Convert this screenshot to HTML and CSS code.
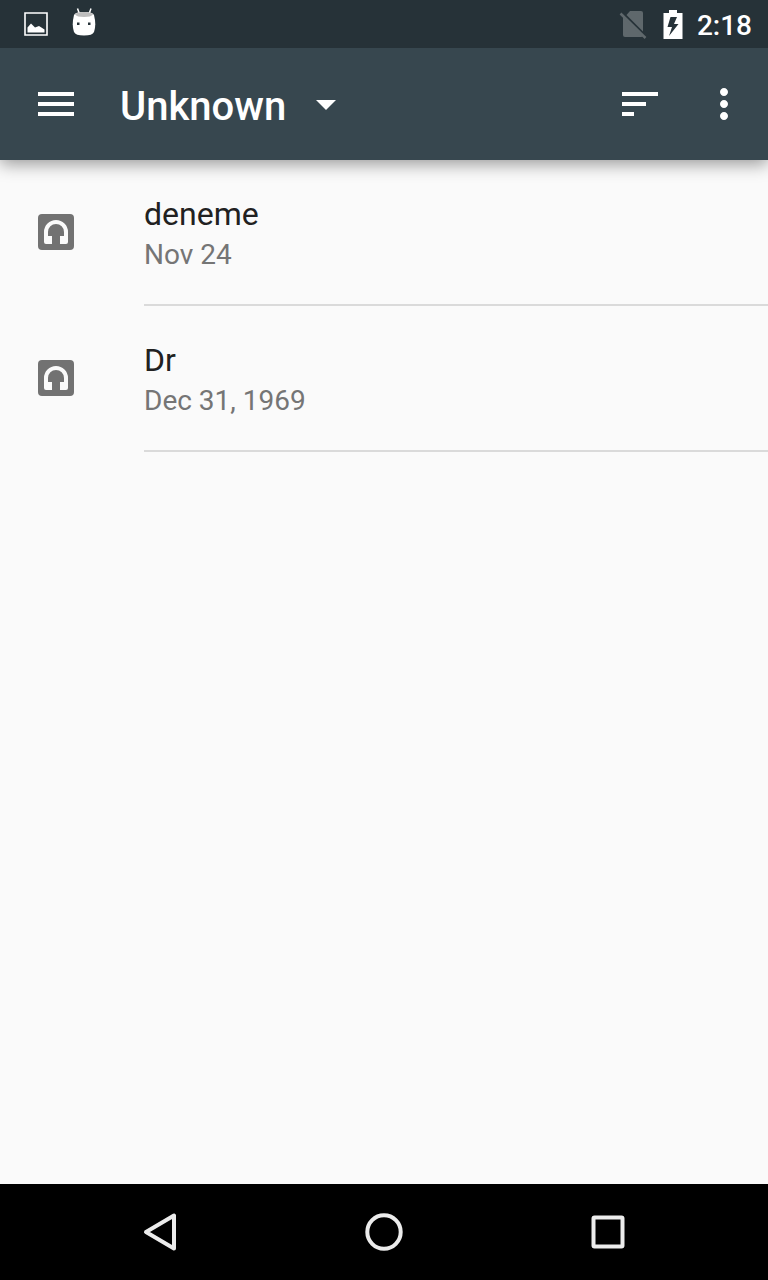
FILE: index.html
```html
<!DOCTYPE html>
<html lang="en">
  <head>
    <meta charset="UTF-8" />
    <meta name="viewport" content="width=device-width, initial-scale=1.0" />
    <title>Unknown</title>
    <link rel="stylesheet" href="styles.css">
  </head>
  <body>
    <!-- Status bar -->
    <div class="status-bar">
      <div class="status-group notifications">
        <svg width="24" height="24" viewBox="0 0 24 24">
          <path d="M1 1H23V23H1Z" fill="none" stroke="#fff" stroke-width="1.6" />
          <path d="M3.5 20.5V15.500L7 11.500L11 15.500L15 14L20.500 17.500V20.500Z" fill="#fff" />
        </svg>
        <svg width="24" height="32" viewBox="0 0 24 32">
          <path d="M5.500 0.500L7.500 6M19 0.500L17 6" stroke="#fff" stroke-width="1.500" />
          <path d="M2 7Q3 4 12 4T22 7Q24.500 17 22 24Q20.500 27.500 12 27.500T2 24Q-0.500 17 2 7Z" fill="#fff" />
          <path d="M3 6.500Q4 4 12 4T21 6.500Q19 9 12 9T3 6.500Z" fill="#bdbdbd" />
          <path d="M5 14.500H7.500V17H5ZM16 14.500H18.500V17H16Z" fill="#263238" />
        </svg>
      </div>
      <div class="status-group">
        <svg width="28" height="32" viewBox="0 0 28 32">
          <path d="M11 3H22Q24 3 24 5V23.500L7.500 7Z" fill="#5f686c" />
          <path d="M4 8L24 28Q23.500 29 22 29H6Q4 29 4 27Z" fill="#5f686c" />
          <path d="M1.500 5.500L26.500 30" stroke="#5f686c" stroke-width="2.500" />
        </svg>
        <svg class="battery" width="20" height="30" viewBox="0 0 20 30">
          <path d="M6 1H14V4H19.500V30H0.500V4H6Z" fill="#fff" />
          <path d="M14 8H7.500L4.500 18H9L6 27L15.500 15H11Z" fill="#263238" />
        </svg>
        <span class="clock">2:18</span>
      </div>
    </div>

    <!-- Toolbar -->
    <header class="toolbar">
      <button class="icon-button" type="button" aria-label="Open menu">
        <svg width="48" height="48" viewBox="0 0 24 24">
          <path d="M3 18h18v-2H3v2zm0-5h18v-2H3v2zm0-7v2h18V6H3z" />
        </svg>
      </button>
      <div class="spinner">
        <select aria-label="Folder">
          <option>Unknown</option>
        </select>
        <svg class="caret" width="48" height="48" viewBox="0 0 24 24">
          <path d="M7 10l5 5 5-5z" />
        </svg>
      </div>
      <div class="actions">
        <button class="icon-button" type="button" aria-label="Sort">
          <svg width="48" height="48" viewBox="0 0 24 24">
            <path d="M3 18h6v-2H3v2zM3 6v2h18V6H3zm0 7h12v-2H3v2z" />
          </svg>
        </button>
        <button class="icon-button" type="button" aria-label="More options">
          <svg width="48" height="48" viewBox="0 0 24 24">
            <path d="M12 8c1.100 0 2-.9 2-2s-.9-2-2-2-2 .9-2 2 .9 2 2 2zm0 2c-1.100 0-2 .9-2 2s.9 2 2 2 2-.9 2-2-.9-2-2-2zm0 6c-1.100 0-2 .9-2 2s.9 2 2 2 2-.9 2-2-.9-2-2-2z" />
          </svg>
        </button>
      </div>
    </header>

    <!-- File list -->
    <main class="content">
      <ul class="file-list">
        <li class="file">
          <svg class="file-icon" width="36" height="36" viewBox="0 0 36 36">
            <rect width="36" height="36" rx="4" fill="#727272" />
            <path d="M6 18a12 12 0 0 1 24 0v10a2 2 0 0 1-2 2h-6V22h4v-4a8 8 0 0 0-16 0v4h4v8H8a2 2 0 0 1-2-2z" fill="#fafafa" />
          </svg>
          <div class="file-text">
            <h2>deneme</h2>
            <p>Nov 24</p>
          </div>
        </li>
        <li class="file">
          <svg class="file-icon" width="36" height="36" viewBox="0 0 36 36">
            <rect width="36" height="36" rx="4" fill="#727272" />
            <path d="M6 18a12 12 0 0 1 24 0v10a2 2 0 0 1-2 2h-6V22h4v-4a8 8 0 0 0-16 0v4h4v8H8a2 2 0 0 1-2-2z" fill="#fafafa" />
          </svg>
          <div class="file-text">
            <h2>Dr</h2>
            <p>Dec 31, 1969</p>
          </div>
        </li>
      </ul>
    </main>

    <!-- Navigation bar -->
    <nav class="nav-bar">
      <button type="button" aria-label="Back">
        <svg width="40" height="40" viewBox="0 0 40 40">
          <path d="M34 3.500V36.500L6 20Z" />
        </svg>
      </button>
      <button type="button" aria-label="Home">
        <svg width="40" height="40" viewBox="0 0 40 40">
          <circle cx="20" cy="20" r="16.700" />
        </svg>
      </button>
      <button type="button" aria-label="Recent apps">
        <svg width="40" height="40" viewBox="0 0 40 40">
          <rect x="5.500" y="5.500" width="29" height="29" rx="1" />
        </svg>
      </button>
    </nav>
  </body>
</html>
```

FILE: styles.css
```css
* {
  margin: 0;
  padding: 0;
  box-sizing: border-box;
}

body {
  font-family: Roboto, 'Noto Sans', sans-serif;
  background: #fafafa;
  color: #212121;
  min-height: 100vh;
  display: flex;
  flex-direction: column;
}

svg {
  display: block;
  flex: none;
}

button {
  background: none;
  border: none;
  cursor: pointer;
}

/* Status bar */
.status-bar {
  height: 48px;
  padding: 0 16px 0 24px;
  background: #263238;
  color: white;
  display: flex;
  align-items: center;
  justify-content: space-between;
  position: relative;
  z-index: 1;
}

.status-group {
  display: flex;
  align-items: center;
}

.notifications {
  gap: 24px;
}

.battery {
  margin: 0 14px 0 16px;
}

.clock {
  font-size: 28px;
  font-weight: 500;
  line-height: 32px;
  padding-top: 4px;
}

/* Toolbar */
.toolbar {
  height: 112px;
  padding: 0 20px 0 32px;
  background: #37474f;
  color: white;
  fill: white;
  display: flex;
  align-items: center;
  box-shadow: 0 4px 16px rgba(0, 0, 0, 0.4);
}

.spinner {
  margin-left: 40px;
  position: relative;
}

.spinner select {
  appearance: none;
  background: none;
  border: none;
  color: white;
  font-family: inherit;
  font-size: 40px;
  font-weight: 500;
  line-height: 48px;
  padding: 6px 63px 0 0;
  cursor: pointer;
}

.spinner option {
  color: #212121;
}

.caret {
  position: absolute;
  top: 3px;
  right: 0;
  pointer-events: none;
}

.actions {
  margin-left: auto;
  display: flex;
  gap: 36px;
}

/* File list */
.content {
  flex: 1;
}

.file-list {
  list-style: none;
}

.file {
  display: flex;
  padding-left: 38px;
}

.file-icon {
  margin: 54px 70px 0 0;
}

.file-text {
  flex: 1;
  padding: 34px 0 28px;
  border-bottom: 2px solid #dadada;
}

.file-text h2 {
  font-size: 32px;
  font-weight: 400;
  line-height: 40px;
}

.file-text p {
  color: #757575;
  font-size: 28px;
  line-height: 42px;
}

/* Navigation bar */
.nav-bar {
  height: 96px;
  padding: 0 48px;
  background: black;
  display: flex;
}

.nav-bar button {
  flex: 1;
  display: flex;
  align-items: center;
  justify-content: center;
}

.nav-bar svg {
  fill: none;
  stroke: #ececec;
  stroke-width: 4;
  stroke-linejoin: round;
}
```
